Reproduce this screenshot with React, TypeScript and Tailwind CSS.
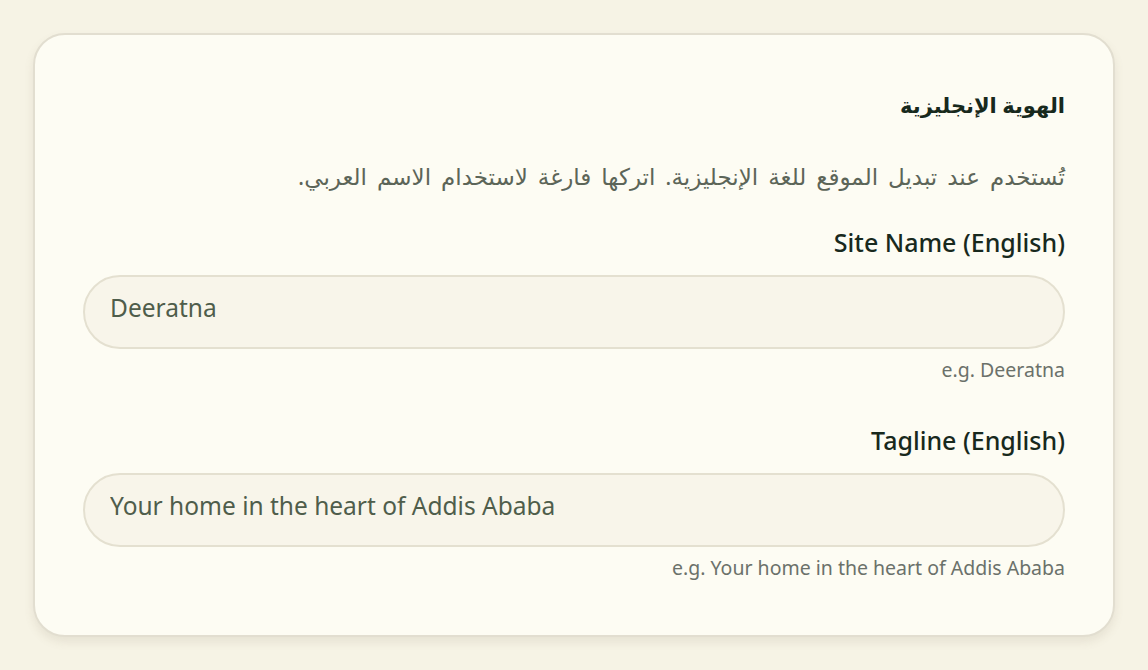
import React from 'react'

interface FieldProps {
  label: string
  value: string
  hint: string
  className?: string
}

function Field({ label, value, hint, className = '' }: FieldProps) {
  return (
    <div className={className}>
      <label className="block text-[25px] leading-8 font-medium text-[#18291d]">{label}</label>
      <input
        dir="ltr"
        readOnly
        value={value}
        className="mt-[17px] block w-full h-[74px] rounded-full border-2 border-[#e4e0d0] bg-[#f8f5ea] px-[25px] pb-[10px] text-[24.5px] text-[#4f5d4b] outline-none"
      />
      <p className="mt-[9px] text-[19.5px] leading-6 text-[#6b716a]">{hint}</p>
    </div>
  )
}

export default function App() {
  return (
    <div
      dir="rtl"
      className="min-h-[670px] bg-[#f6f3e5] p-[33px]"
      style={{ fontFamily: '"Noto Sans", "DejaVu Sans", sans-serif' }}
    >
      <div className="rounded-[32px] border-2 border-[#e2ded0] bg-[#fdfcf3] px-12 pt-12 pb-[55px] shadow-[0_5px_10px_rgba(120,110,80,0.12)]">
        <h2 className="text-[21px] leading-[44px] font-bold text-[#17291c]">الهوية الإنجليزية</h2>
        <p className="mt-[33px] text-[23px] leading-8 text-[#5c6558] [word-spacing:4px]">
          تُستخدم عند تبديل الموقع للغة الإنجليزية. اتركها فارغة لاستخدام الاسم العربي.
        </p>
        <Field className="mt-[34px]" label="Site Name (English)" value="Deeratna" hint="e.g. Deeratna" />
        <Field
          className="mt-[42px]"
          label="Tagline (English)"
          value="Your home in the heart of Addis Ababa"
          hint="e.g. Your home in the heart of Addis Ababa"
        />
      </div>
    </div>
  )
}
